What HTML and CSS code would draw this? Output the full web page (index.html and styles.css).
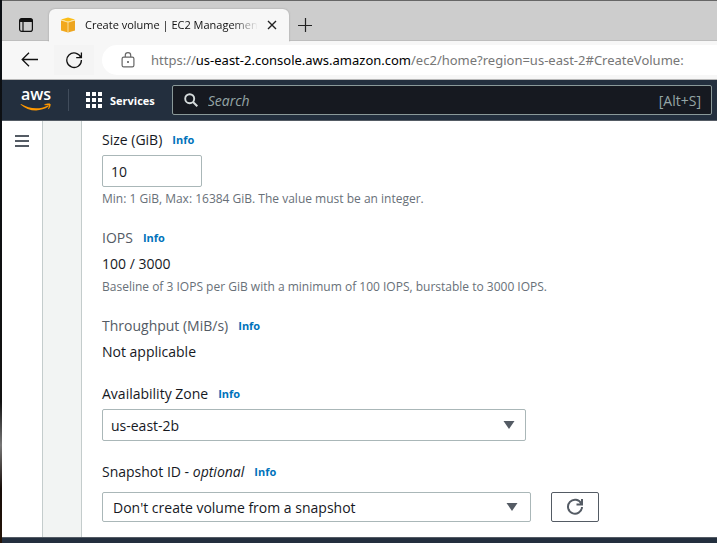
FILE: index.html
```html
<!DOCTYPE html>
<html lang="en">
<head>
<meta charset="utf-8">
<title>Create volume | EC2 Management Console</title>
<link rel="stylesheet" href="styles.css">
</head>
<body>
<div class="window">
  <header class="tabbar">
    <button class="icon-button tab-actions" aria-label="Tab actions">
      <svg width="16" height="16" viewBox="0 0 16 16"><rect x="1.6" y="1.6" width="12.8" height="12.8" rx="2.2" fill="none" stroke="#111" stroke-width="1.2"/><path d="M1.5 5V3.5a2 2 0 0 1 2-2h9a2 2 0 0 1 2 2V5z" fill="#111"/><path d="M5 5v9.5" stroke="#111" stroke-width="1.2"/></svg>
    </button>
    <div class="tab">
      <svg class="favicon" width="16" height="16" viewBox="0 0 16 16"><path d="M1 3.2 8 5v10.6l-7-2.2z" fill="#f2a81d"/><path d="M15 3.2 8 5v10.6l7-2.2z" fill="#eda51f"/><path d="M1 2.6 8 .4l7 2.2L8 4.8z" fill="#fbbd18"/><path d="M.8 3 8 5.2 15.2 3M8 5v10.6" fill="none" stroke="#fce3a4" stroke-width=".9"/></svg>
      <span class="tab-title">Create volume | EC2 Management</span>
      <button class="icon-button" aria-label="Close tab"><svg width="10" height="10" viewBox="0 0 10 10"><path d="m1 1 8 8M9 1 1 9" stroke="#222" stroke-width="1.4"/></svg></button>
    </div>
    <button class="icon-button new-tab" aria-label="New tab"><svg width="14" height="14" viewBox="0 0 14 14"><path d="M7.5 0v14M0 7.5h14" stroke="#222" stroke-width="1.2"/></svg></button>
  </header>
  <div class="toolbar">
    <button class="icon-button back" aria-label="Back"><svg width="18" height="16" viewBox="0 0 18 16"><path d="M17 7.5H1.5M8 .8 1.2 7.5 8 14.2" fill="none" stroke="#111" stroke-width="1.3"/></svg></button>
    <button class="icon-button reload" aria-label="Reload"><svg width="18" height="18" viewBox="0 0 18 18"><path d="M15.9 6.5A7.3 7.3 0 1 0 16.4 9M16.4 1.500v5.200h-5.200" fill="none" stroke="#111" stroke-width="1.3"/></svg></button>
    <div class="address">
      <svg width="14" height="16" viewBox="0 0 14 16"><rect x="1.1" y="5.1" width="11.8" height="9.800" rx="1.6" fill="none" stroke="#666" stroke-width="1.2"/><path d="M4.300 5V3.300a2.700 2.700 0 0 1 5.400 0V5" fill="none" stroke="#666" stroke-width="1.2"/><circle cx="7" cy="10" r="1" fill="#555"/></svg>
      <span class="url">https://<b>us-east-2.console.aws.amazon.com</b>/ec2/home?region=us-east-2#CreateVolume:</span>
    </div>
  </div>
  <nav class="nav">
    <a class="logo" href="#home" aria-label="AWS home">
      <span class="logo-text">aws</span>
      <svg width="32" height="9" viewBox="0 0 32 9"><path d="M.5 1.400C8 8.400 20 9.500 28.500 3.600l-.7-1.200C19.500 6.700 9.500 6 1 1z" fill="#f90"/><path d="M24.700 1.600c2.500-1.200 5-1.100 5.500-.6.500.7-.2 3.500-1.900 5.100.5-1.500 1-3.200.6-3.700-.5-.5-2.400-.6-4.200-.4z" fill="#f90" stroke="#f90" stroke-width=".5"/></svg>
    </a>
    <span class="divider"></span>
    <button class="services">
      <svg width="17" height="17" viewBox="0 0 17 17" fill="#fff"><path d="M0 0h4v4H0zM6 0h4v4H6zM12 0h4v4h-4zM0 6h4v4H0zM6 6h4v4H6zM12 6h4v4h-4zM0 12h4v4H0zM6 12h4v4H6zM12 12h4v4h-4z"/></svg>
      Services
    </button>
    <label class="search">
      <svg width="14" height="14" viewBox="0 0 14 14"><circle cx="5.700" cy="5.700" r="4.500" fill="none" stroke="#d5dbdb" stroke-width="1.900"/><path d="m9 9 4.300 4.300" stroke="#d5dbdb" stroke-width="2"/></svg>
      <input type="search" placeholder="Search" aria-label="Search">
      <span>[Alt+S]</span>
    </label>
  </nav>
  <div class="page">
    <aside class="rail"><button class="icon-button" aria-label="Open navigation"><svg width="14" height="12" viewBox="0 0 14 12"><path d="M0 1h14M0 6h14M0 11h14" stroke="#545b64" stroke-width="2"/></svg></button></aside>
    <div class="gutter"></div>
    <main class="form">
      <div class="field">
        <div class="heading"><label for="size">Size (GiB)</label><a href="#size-info">Info</a></div>
        <input class="control size" id="size" type="text" value="10">
        <p class="hint">Min: 1 GiB, Max: 16384 GiB. The value must be an integer.</p>
      </div>
      <div class="field">
        <div class="heading muted"><span>IOPS</span><a href="#iops-info">Info</a></div>
        <p class="value">100 / 3000</p>
        <p class="hint">Baseline of 3 IOPS per GiB with a minimum of 100 IOPS, burstable to 3000 IOPS.</p>
      </div>
      <div class="field">
        <div class="heading muted"><span>Throughput (MiB/s)</span><a href="#throughput-info">Info</a></div>
        <p class="value">Not applicable</p>
      </div>
      <div class="field">
        <div class="heading"><label for="zone">Availability Zone</label><a href="#zone-info">Info</a></div>
        <div class="select zone">
          <select class="control" id="zone"><option>us-east-2b</option></select>
          <svg width="12" height="8" viewBox="0 0 12 8"><path d="M.5 0h11L6 8z" fill="#545b64"/></svg>
        </div>
      </div>
      <div class="field">
        <div class="heading"><label for="snapshot">Snapshot ID - <i>optional</i></label><a href="#snapshot-info">Info</a></div>
        <div class="row">
          <div class="select snapshot">
            <select class="control" id="snapshot"><option>Don't create volume from a snapshot</option></select>
            <svg width="12" height="8" viewBox="0 0 12 8"><path d="M.5 0h11L6 8z" fill="#545b64"/></svg>
          </div>
          <button class="refresh" aria-label="Refresh snapshots"><svg width="18" height="18" viewBox="0 0 18 18"><path d="M15.300 5.600A7 7 0 1 0 16 9M16 1v5.500h-5.500" fill="none" stroke="#545b64" stroke-width="2"/></svg></button>
        </div>
      </div>
    </main>
  </div>
  <footer class="footer"></footer>
</div>
</body>
</html>
```
FILE: styles.css
```css
* { box-sizing: border-box; }

body {
  margin: 0;
  padding-left: 2px;
  background: linear-gradient(#0b0f14 0, #111 68%, #111 74%, #777 82%, #160c08 90%, #251408);
  font-family: "Open Sans", sans-serif;
  font-size: 14px;
  color: #16191f;
}

button, input, select { font: inherit; color: inherit; }
p { margin: 0; }
svg { display: block; flex: none; }

.window {
  display: flex;
  flex-direction: column;
  min-height: 100vh;
  background: #fff;
}

.icon-button {
  display: flex;
  align-items: center;
  justify-content: center;
  padding: 0;
  border: 0;
  background: none;
}

.tabbar {
  display: flex;
  height: 41px;
  padding: 8px 0 0 16px;
  border-top: 1px solid #666;
  border-bottom: 1px solid #bebebe;
  background: #cdcdcd;
}

.tab-actions { width: 16px; height: 32px; }

.tab {
  display: flex;
  align-items: center;
  gap: 9px;
  width: 240px;
  height: 33px;
  margin-left: 15px;
  padding: 0 12px 2px 11px;
  border-radius: 6px 6px 0 0;
  background: #f7f7f7;
  box-shadow: 0 0 2px #999;
  clip-path: inset(-3px -3px 0);
}

.tab-title {
  flex: 1;
  overflow: hidden;
  font-size: 11px;
  white-space: nowrap;
  color: #111;
  mask-image: linear-gradient(to right, #000 85%, transparent);
}

.new-tab { width: 32px; height: 32px; }

.toolbar {
  display: flex;
  align-items: center;
  height: 39px;
  padding-left: 19px;
  border-bottom: 1px solid #b8b8b8;
  background: #f7f7f7;
}

.reload {
  width: 40px;
  height: 30px;
  margin-left: 15px;
  background: #f4f4f4;
}

.address {
  display: flex;
  flex: 1;
  align-items: center;
  gap: 16px;
  height: 30px;
  margin-left: 8px;
  padding-left: 19px;
  border-radius: 15px 0 0 15px;
  background: #fff;
}

.url {
  font-family: "Noto Sans", sans-serif;
  font-size: 13px;
  white-space: nowrap;
  color: #767676;
}
.url b { font-weight: 400; color: #000; }

.nav {
  display: flex;
  align-items: center;
  height: 41px;
  padding: 0 5px 0 18px;
  border-bottom: 1px solid #545b64;
  background: #232f3e;
  color: #fff;
}

.logo {
  display: flex;
  flex-direction: column;
  align-items: center;
  width: 32px;
  color: #fff;
  text-decoration: none;
}
.logo-text {
  height: 15px;
  font-size: 16px;
  font-weight: 600;
  line-height: 12px;
}

.divider {
  width: 1px;
  height: 22px;
  margin: 0 17px 0 16px;
  background: #414d5c;
}

.services {
  display: flex;
  align-items: center;
  gap: 7px;
  padding: 0;
  border: 0;
  background: none;
  font-size: 11px;
  font-weight: 700;
}

.search {
  display: flex;
  flex: 1;
  align-items: center;
  gap: 10px;
  height: 30px;
  margin-left: 17px;
  padding: 0 10px 0 11px;
  border: 1px solid #8a9999;
  border-radius: 2px;
  background: #161920;
  color: #95a5a6;
}
.search input {
  flex: 1;
  min-width: 0;
  padding: 0;
  border: 0;
  outline: 0;
  background: none;
}
.search input::placeholder { color: #95a5a6; font-style: italic; }

.page { display: flex; flex: 1; }
.rail { width: 41px; padding: 14px 0 0 13px; border-right: 1px solid #c4cccc; }
.gutter { width: 39px; border-right: 1px solid #c4cccc; background: #f2f4f3; }

.form {
  display: flex;
  flex: 1;
  flex-direction: column;
  gap: 20px;
  padding: 8px 20px 10px;
}

.field { display: flex; flex-direction: column; gap: 4px; }
.heading {
  display: flex;
  align-items: center;
  gap: 10px;
  line-height: 22px;
}
.heading a {
  font-size: 11px;
  font-weight: 700;
  color: #0073bb;
  text-decoration: none;
}
.muted { color: #545b64; }
.value { line-height: 22px; }
.hint { font-size: 12px; line-height: 16px; color: #687078; }

.control {
  height: 32px;
  padding: 0 8px;
  border: 1px solid #aab7b8;
  border-radius: 2px;
  background: #fff;
}
.size { width: 100px; }

.select { display: grid; align-items: center; max-width: 100%; }
.select > * { grid-area: 1 / 1; }
.select svg { justify-self: end; margin-right: 11px; pointer-events: none; }
.select .control { width: 100%; appearance: none; }
.zone { width: 424px; }
.snapshot { width: 429px; }
.snapshot .control { height: 30px; padding-left: 10px; }
.snapshot svg { margin-right: 13px; }

.row { display: flex; align-items: center; gap: 20px; height: 40px; }
.refresh {
  display: flex;
  align-items: center;
  justify-content: center;
  width: 48px;
  height: 30px;
  border: 1px solid #545b64;
  border-radius: 2px;
  background: #fff;
}

.footer { height: 6px; border-top: 1px solid #545b64; background: #232f3e; }
```
